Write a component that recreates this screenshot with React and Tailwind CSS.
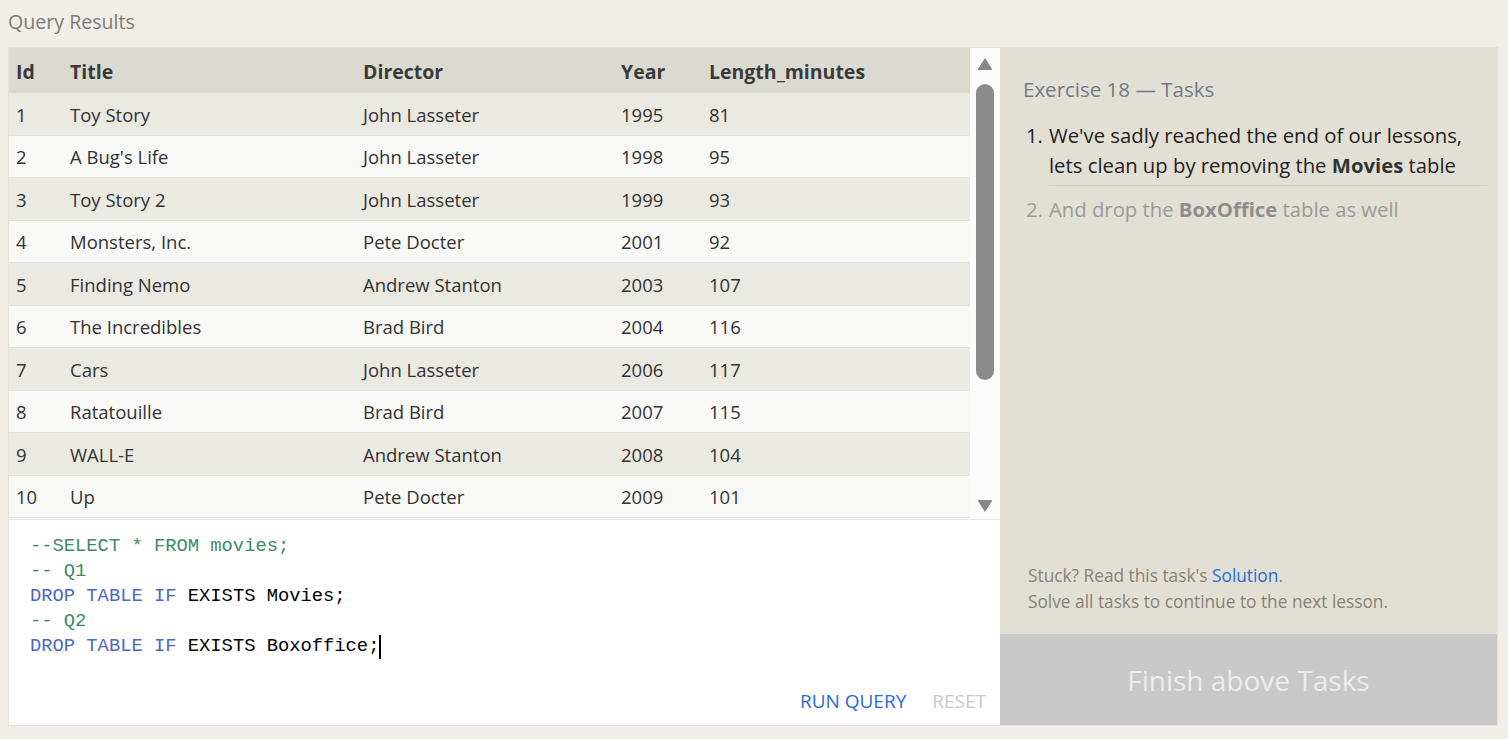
import React from "react";

const rows = [
  [1, "Toy Story", "John Lasseter", 1995, 81],
  [2, "A Bug's Life", "John Lasseter", 1998, 95],
  [3, "Toy Story 2", "John Lasseter", 1999, 93],
  [4, "Monsters, Inc.", "Pete Docter", 2001, 92],
  [5, "Finding Nemo", "Andrew Stanton", 2003, 107],
  [6, "The Incredibles", "Brad Bird", 2004, 116],
  [7, "Cars", "John Lasseter", 2006, 117],
  [8, "Ratatouille", "Brad Bird", 2007, 115],
  [9, "WALL-E", "Andrew Stanton", 2008, 104],
  [10, "Up", "Pete Docter", 2009, 101],
];

const sans = { fontFamily: '"Open Sans", "Noto Sans", sans-serif' };

export default function App() {
  return (
    <div className="w-[1508px] h-[739px] bg-[#f0eee7] overflow-hidden" style={sans}>
      <div className="px-2 pt-[8px] h-[47px] text-[19.6px] leading-[28px] text-[#7b7b7b]">Query Results</div>
      <div className="mx-2 flex h-[679px] border border-[#e4e2da] w-[1490px]">
        {/* left */}
        <div className="w-[991px] flex flex-col">
          <div className="flex h-[471px] bg-white">
            <div className="w-[961px] text-[18.5px] text-[#333]">
              <div className="flex h-[45px] items-center bg-[#dadad0] font-bold text-[19.5px] text-[#3a3a3a] pt-[2px]">
                <div className="w-[53px] pl-[7px]">Id</div>
                <div className="w-[293px] pl-[8px]">Title</div>
                <div className="w-[258px] pl-[8px]">Director</div>
                <div className="w-[88px] pl-[8px]">Year</div>
                <div className="flex-1 pl-[8px]">Length_minutes</div>
              </div>
              {rows.map((r, i) => (
                <div
                  key={r[0]}
                  className={`flex h-[42.5px] items-center pt-[2px] border-b border-[#e2e2dc] ${i % 2 === 0 ? "bg-[#eae9e2]" : "bg-[#f8f8f7]"}`}
                >
                  <div className="w-[53px] pl-[7px]">{r[0]}</div>
                  <div className="w-[293px] pl-[8px]">{r[1]}</div>
                  <div className="w-[258px] pl-[8px]">{r[2]}</div>
                  <div className="w-[88px] pl-[8px]">{r[3]}</div>
                  <div className="flex-1 pl-[8px]">{r[4]}</div>
                </div>
              ))}
            </div>
            <div className="w-[30px] bg-[#fbfbfb] flex flex-col items-center pt-[9px]">
              <svg width="16" height="14" viewBox="0 0 16 14">
                <path d="M8 1 L15 12 Q15.5 13 14 13 L2 13 Q0.5 13 1 12 Z" fill="#888" />
              </svg>
              <div className="mt-[13px] w-[18px] h-[296px] rounded-full bg-[#8a8a8a]" />
              <div className="flex-1" />
              <svg width="16" height="14" viewBox="0 0 16 14" className="mb-[6px]">
                <path d="M8 13 L15 2 Q15.5 1 14 1 L2 1 Q0.5 1 1 2 Z" fill="#888" />
              </svg>
            </div>
          </div>
          <div className="flex-1 bg-white border-t border-[#e8e6de] flex flex-col">
            <div
              className="pl-[21px] pt-[14px] text-[18.8px] leading-[25px] whitespace-pre"
              style={{ fontFamily: '"Liberation Mono", monospace' }}
            >
              <div className="text-[#3a8a6a]">--SELECT * FROM movies;</div>
              <div className="text-[#3a8a6a]">-- Q1</div>
              <div>
                <span className="text-[#4a68c8]">DROP TABLE IF </span>
                <span className="text-black">EXISTS Movies;</span>
              </div>
              <div className="text-[#3a8a6a]">-- Q2</div>
              <div className="flex items-center">
                <span className="text-[#4a68c8]">DROP TABLE IF </span>
                <span className="text-black">EXISTS Boxoffice;</span>
                <span className="inline-block w-[2px] h-[24px] bg-black" />
              </div>
            </div>
            <div className="flex-1" />
            <div className="flex justify-end gap-[26px] pr-[14px] pb-[10px] text-[19px]">
              <span className="text-[#2a6ad8]">RUN QUERY</span>
              <span className="text-[#c8c8c8]">RESET</span>
            </div>
          </div>
        </div>
        {/* right */}
        <div className="flex-1 flex flex-col bg-[#e2e0d5]">
          <div className="flex-1 pl-[23px] pr-[10px] pt-[27px] flex flex-col">
            <div className="text-[20.5px] text-[#727b86] leading-[28px]">Exercise 18 — Tasks</div>
            <ol className="mt-[17px] text-[20.3px] leading-[30px]">
              <li className="flex pl-[3px]">
                <span className="w-[23px] text-[#222]">1.</span>
                <div className="flex-1 text-[#222] border-b border-[#d5d3c8] pb-[5px]">
                  We've sadly reached the end of our lessons, lets clean up by removing the <b className="text-[#333]">Movies</b> table
                </div>
              </li>
              <li className="flex pl-[3px] text-[#9a9a9a] pt-[8px]">
                <span className="w-[23px]">2.</span>
                <div className="flex-1">
                  And drop the <b className="text-[#8e8e8e]">BoxOffice</b> table as well
                </div>
              </li>
            </ol>
            <div className="flex-1" />
            <div className="pl-[5px] pb-[19px] text-[17.3px] leading-[26px] text-[#8a8078]">
              <div>
                Stuck? Read this task's <span className="text-[#2a6ad8]">Solution</span>.
              </div>
              <div>Solve all tasks to continue to the next lesson.</div>
            </div>
          </div>
          <div className="h-[91px] bg-[#c8c8c8] flex items-center justify-center text-[28px] text-[#ececec]">
            Finish above Tasks
          </div>
        </div>
      </div>
    </div>
  );
}
